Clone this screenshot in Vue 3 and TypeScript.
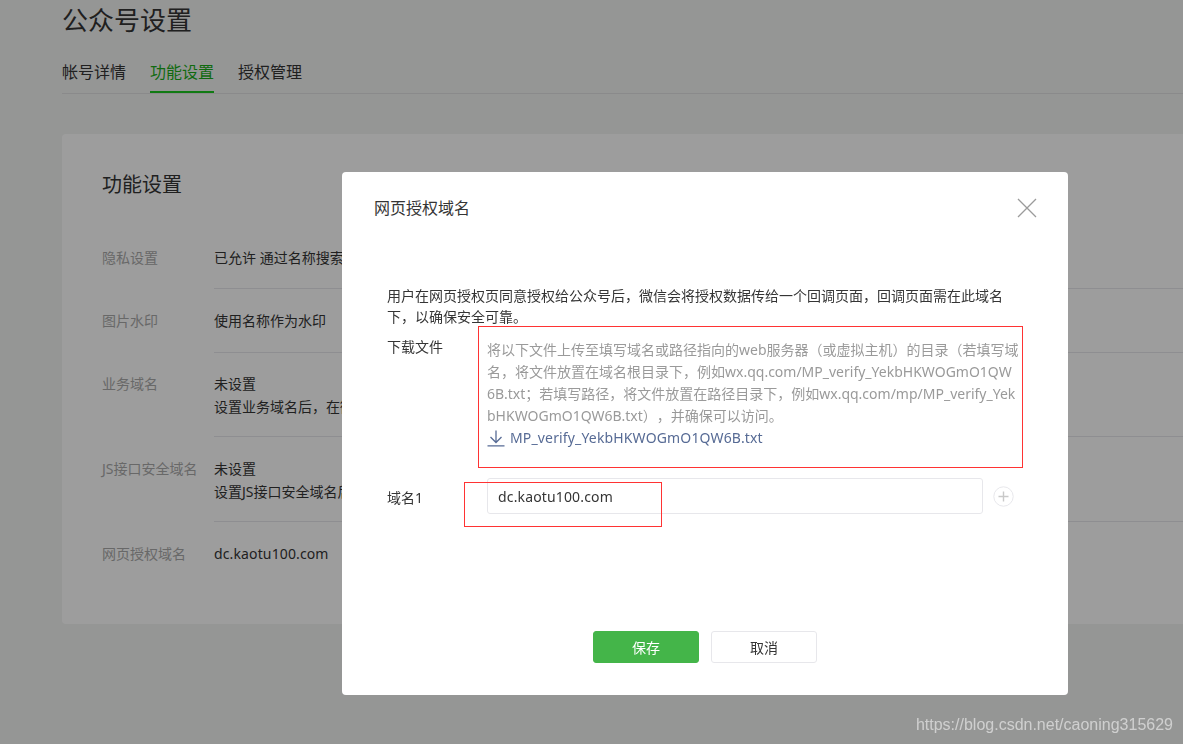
<script setup lang="ts">
interface SettingRow {
  label: string
  lines: string[]
  extra?: string
}

const rows: SettingRow[] = [
  { label: '隐私设置', lines: ['已允许 通过名称搜索到本帐号'], extra: 'first' },
  { label: '图片水印', lines: ['使用名称作为水印'] },
  { label: '业务域名', lines: ['未设置', '设置业务域名后，在微'], extra: 'two' },
  { label: 'JS接口安全域名', lines: ['未设置', '设置JS接口安全域名后'], extra: 'two js' },
  { label: '网页授权域名', lines: ['dc.kaotu100.com'], extra: 'last' },
]

const hintLines: string[] = [
  '将以下文件上传至填写域名或路径指向的web服务器（或虚拟主机）的目录（若填写域',
  '名，将文件放置在域名根目录下，例如wx.qq.com/MP_verify_YekbHKWOGmO1QW',
  '6B.txt；若填写路径，将文件放置在路径目录下，例如wx.qq.com/mp/MP_verify_Yek',
  'bHKWOGmO1QW6B.txt），并确保可以访问。',
]
</script>

<template>
  <div class="page">
    <h1 class="page-title">公众号设置</h1>
    <nav class="tabs">
      <a class="tab">帐号详情</a>
      <a class="tab active">功能设置</a>
      <a class="tab">授权管理</a>
    </nav>
    <section class="card">
      <h2 class="card-title">功能设置</h2>
      <div v-for="row in rows" :key="row.label" class="row" :class="row.extra">
        <div class="row-label">{{ row.label }}</div>
        <div class="row-value">
          <div v-for="line in row.lines" :key="line" class="row-line">{{ line }}</div>
        </div>
      </div>
    </section>
  </div>

  <div class="overlay"></div>

  <div class="modal">
    <header class="modal-head">
      <span class="modal-title">网页授权域名</span>
      <svg class="close" width="20" height="20" viewBox="0 0 20 20" fill="none" stroke="#9b9b9b" stroke-width="1.3">
        <path d="M1 1 L19 19 M19 1 L1 19" />
      </svg>
    </header>

    <div class="modal-body">
      <p class="intro">用户在网页授权页同意授权给公众号后，微信会将授权数据传给一个回调页面，回调页面需在此域名<br />下，以确保安全可靠。</p>
      <div class="file-row">
        <div class="form-label">下载文件</div>
        <div class="hint">
          <div v-for="line in hintLines" :key="line" class="hint-line">{{ line }}</div>
          <a class="file-link">
            <svg width="18" height="17" viewBox="0 0 18 17" fill="none" stroke="#576b95" stroke-width="1.3">
              <path d="M9 0.5 V12 M3.5 7 L9 12.5 L14.5 7 M0.5 15.8 H17.5" />
            </svg>
            <span class="latin">MP_verify_YekbHKWOGmO1QW6B.txt</span>
          </a>
        </div>
      </div>
      <div class="domain-row">
        <div class="form-label domain-label">域名1</div>
        <div class="input latin">dc.kaotu100.com</div>
        <svg class="plus" width="21" height="21" viewBox="0 0 21 21" fill="none">
          <circle cx="10.5" cy="10.5" r="9.7" stroke="#e7e7eb" stroke-width="1" />
          <path d="M10.5 5.5 V15.5 M5.5 10.5 H15.5" stroke="#c9c9c9" stroke-width="1.4" />
        </svg>
      </div>
    </div>

    <footer class="modal-foot">
      <button class="btn primary" type="button">保存</button>
      <button class="btn" type="button">取消</button>
    </footer>

    <div class="mark mark-file"></div>
    <div class="mark mark-domain"></div>
  </div>

  <div class="watermark">https://blog.csdn.net/caoning315629</div>
</template>

<style>
html, body {
  margin: 0;
  height: 744px;
  overflow: hidden;
  background: #f3f4f3;
}
</style>

<style scoped>
.page {
  padding-left: 62px;
  box-sizing: border-box;
  font-family: "Noto Sans", "Noto Sans CJK SC", sans-serif;
  color: #353535;
  font-size: 14px;
}
.page-title {
  margin: 0;
  height: 41px;
  line-height: 40px;
  font-size: 26px;
  font-weight: 400;
}
.tabs {
  display: flex;
  gap: 24px;
  margin-top: 10px;
  height: 42px;
  border-bottom: 1px solid #e0e1e2;
}
.tab {
  height: 42px;
  line-height: 43px;
  font-size: 16px;
  box-sizing: border-box;
}
.tab.active {
  color: #1aad19;
  border-bottom: 2px solid #1ac71f;
}
.card {
  margin-top: 40px;
  height: 490px;
  box-sizing: border-box;
  background: #fff;
  border-radius: 4px 0 0 4px;
  padding: 36px 0 0 40px;
}
.card-title {
  margin: 0 0 46px;
  font-size: 20px;
  font-weight: 400;
  line-height: 30px;
}
.row {
  display: flex;
}
.row-label {
  width: 112px;
  flex: none;
  color: #aaa;
  line-height: 23px;
  padding-top: 20px;
  white-space: nowrap;
}
.row.first .row-label {
  padding-top: 0;
}
.row-value {
  flex: 1;
  padding: 20px 0;
  border-bottom: 1px solid #e7e7eb;
}
.row.first .row-value {
  padding: 0 0 19px;
}
.row.two .row-label {
  padding-top: 19px;
}
.row.two .row-value {
  padding: 19px 0 18px;
}
.row.js .row-label {
  padding-top: 20px;
}
.row.js .row-value {
  padding-top: 20px;
}
.row.last .row-value {
  border-bottom: 0;
  letter-spacing: 0.13px;
}
.row-line {
  line-height: 23px;
  white-space: nowrap;
}
.overlay {
  position: fixed;
  inset: 0;
  background: rgba(0, 0, 0, 0.385);
}
.modal {
  position: fixed;
  left: 342px;
  top: 172px;
  width: 726px;
  height: 523px;
  display: flex;
  flex-direction: column;
  background: #fff;
  border-radius: 4px;
  color: #353535;
  font-family: "Noto Sans", "Noto Sans CJK SC", sans-serif;
  font-size: 14px;
  text-spacing-trim: space-all;
}
.modal-head {
  height: 72px;
  flex: none;
  display: flex;
  align-items: center;
  justify-content: space-between;
  padding: 0 31px 0 32px;
}
.modal-title {
  font-size: 16px;
  line-height: 72px;
}
.modal-body {
  padding: 0 45px;
}
.intro {
  margin: 41px 0 0;
  line-height: 21px;
}
.file-row {
  display: flex;
  margin-top: 9px;
}
.form-label {
  width: 100px;
  flex: none;
  line-height: 21px;
}
.domain-label {
  padding-top: 2px;
}
.hint {
  padding-top: 3px;
  color: #9a9a9a;
  line-height: 22px;
}
.hint-line {
  white-space: nowrap;
}
.file-link {
  display: flex;
  align-items: center;
  gap: 5px;
  color: #576b95;
  white-space: nowrap;
}
.latin {
  letter-spacing: 0.15px;
}
.domain-row {
  display: flex;
  align-items: center;
  margin-top: 29px;
}
.input {
  width: 496px;
  height: 36px;
  flex: none;
  box-sizing: border-box;
  border: 1px solid #e7e7eb;
  border-radius: 3px;
  padding-left: 10px;
  line-height: 36px;
}
.plus {
  margin-left: 10px;
}
.modal-foot {
  margin-top: auto;
  padding-bottom: 32px;
  display: flex;
  justify-content: center;
  gap: 12px;
}
.btn {
  width: 106px;
  height: 32px;
  box-sizing: border-box;
  padding: 0;
  border: 1px solid #e7e7eb;
  border-radius: 3px;
  background: #fff;
  color: #353535;
  font-family: inherit;
  font-size: 14px;
  font-weight: 400;
}
.btn.primary {
  background: #44b549;
  border-color: #44b549;
  color: #fff;
}
.mark {
  position: absolute;
  box-sizing: border-box;
  border: 1px solid #f33;
}
.mark-file {
  left: 136px;
  top: 154px;
  width: 545px;
  height: 142px;
}
.mark-domain {
  left: 122px;
  top: 310px;
  width: 198px;
  height: 45px;
}
.watermark {
  position: fixed;
  right: 10px;
  top: 715px;
  font-family: "Liberation Sans", sans-serif;
  font-size: 16px;
  line-height: 19px;
  color: rgba(255, 255, 255, 0.55);
}
</style>
